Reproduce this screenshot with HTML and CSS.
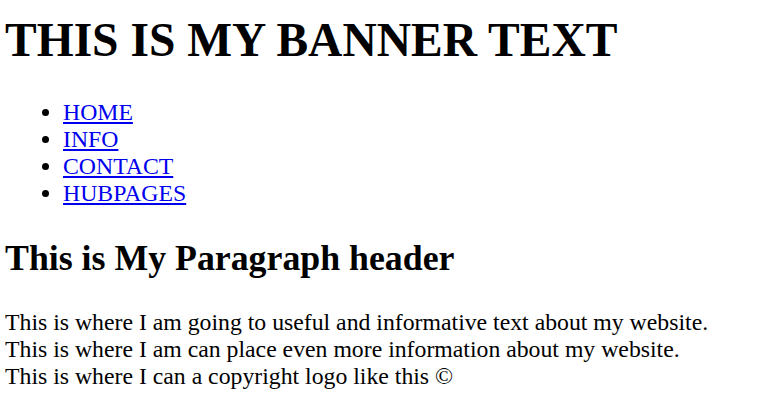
FILE: index.html
```html
<!DOCTYPE html>
<html>
<head>
<meta charset="utf-8">
<link rel="stylesheet" href="styles.css">
</head>
<body>
<h1 class="banner">THIS IS MY BANNER TEXT</h1>
<ul class="nav">
<li><a href="#">HOME</a></li>
<li><a href="#">INFO</a></li>
<li><a href="#">CONTACT</a></li>
<li><a href="#">HUBPAGES</a></li>
</ul>
<h2 class="heading">This is My Paragraph header</h2>
<p class="text">This is where I am going to useful and informative text about my website.<br>
This is where I am can place even more information about my website.<br>
This is where I can a copyright logo like this &copy;</p>
</body>
</html>
```
FILE: styles.css
```css
body {
  margin: 0 5px;
  font-family: "Liberation Serif", "Times New Roman", serif;
  font-size: 23.76px;
  color: #000;
}
.banner {
  font-size: 47.5px;
  margin: 13px 0 32px;
}
.nav {
  margin: 0;
  padding-left: 58px;
  line-height: 27px;
}
.nav a {
  color: #0000ee;
}
.heading {
  font-size: 35.8px;
  margin: 30px 0 30px;
}
.text {
  margin: 0;
  line-height: 27px;
}
```
